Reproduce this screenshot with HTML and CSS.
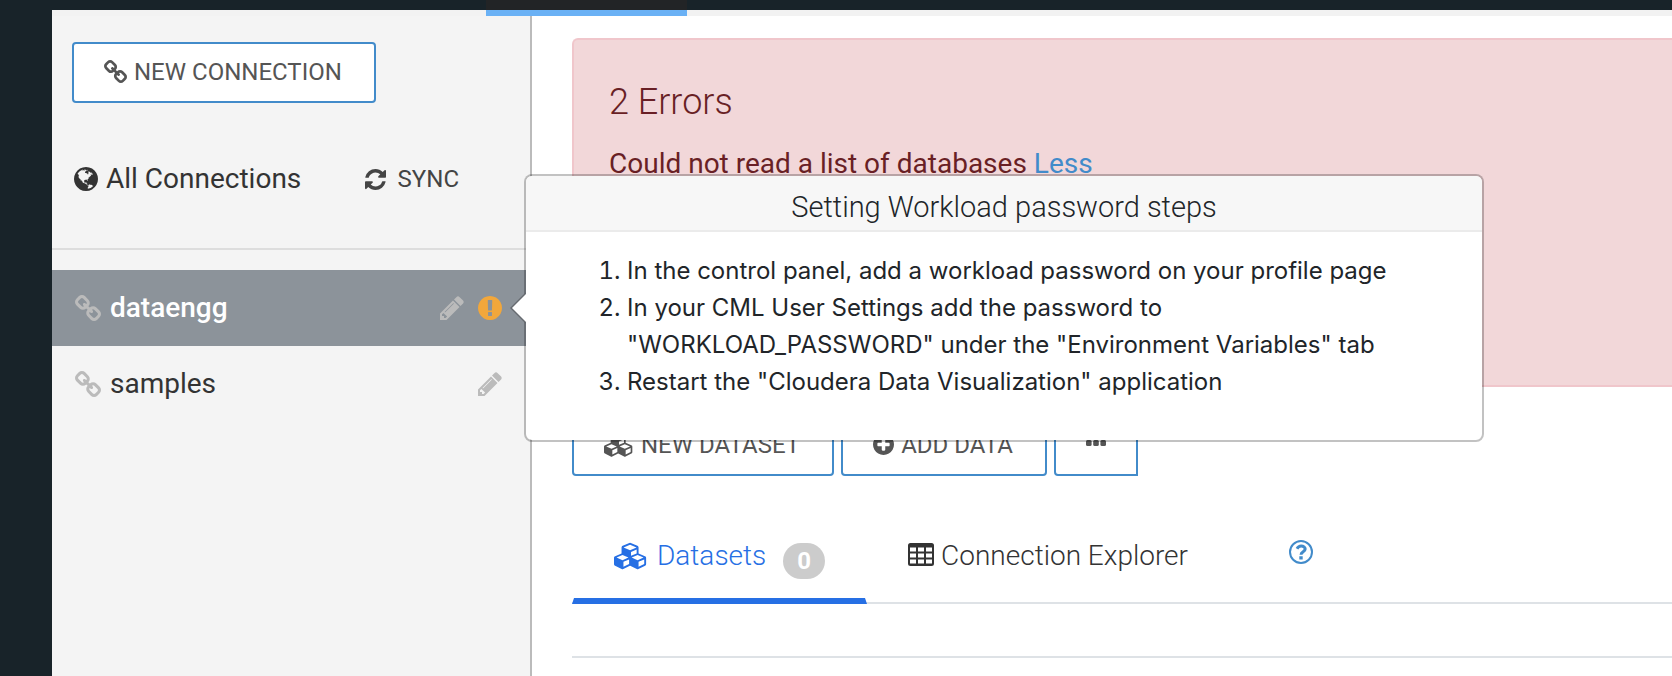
FILE: index.html
```html
<!DOCTYPE html>
<html lang="en">
<head>
<meta charset="utf-8">
<title>Connections</title>
<link rel="stylesheet" href="styles.css">
</head>
<body>
<svg class="defs" aria-hidden="true">
  <symbol id="i-link" viewBox="16 16 1632 1632"><path d="M1456 1216q0-40-28-68l-208-208q-28-28-68-28-42 0-72 32 3 3 19 18.500t21.500 21.500 15 19 13 25.500 3.500 27.500q0 40-28 68t-68 28q-15 0-27.500-3.500t-25.500-13-19-15-21.500-21.500-18.500-19q-33 31-33 73 0 40 28 68l206 207q27 27 68 27 40 0 68-26l147-146q28-28 28-67zm-703-705q0-40-28-68l-206-207q-28-28-68-28-39 0-68 27l-147 146q-28 28-28 67 0 40 28 68l208 208q27 27 68 27 42 0 72-31-3-3-19-18.500t-21.500-21.500-15-19-13-25.500-3.500-27.500q0-40 28-68t68-28q15 0 27.500 3.500t25.500 13 19 15 21.500 21.500 18.500 19q33-31 33-73zm895 705q0 120-85 203l-147 146q-83 83-203 83-121 0-204-85l-206-207q-83-83-83-203 0-123 88-209l-88-88q-86 88-208 88-120 0-204-84l-208-208q-84-84-84-204t85-203l147-146q83-83 203-83 121 0 204 85l206 207q83 83 83 203 0 123-88 209l88 88q86-88 208-88 120 0 204 84l208 208q84 84 84 204z"/></symbol>
  <symbol id="i-globe" viewBox="128 128 1536 1536"><path d="M896 128q209 0 385.500 103t279.500 279.500 103 385.500-103 385.500-279.500 279.500-385.500 103-385.500-103-279.500-279.500-103-385.500 103-385.500 279.500-279.500 385.500-103zm274 521q-2 1-9.500 9.500t-13.500 9.500q2 0 4.500-5t5-11 3.500-7q6-7 22-15 14-6 52-12 34-8 51 11-2-2 9.500-13t14.500-12q3-2 15-4.500t15-7.500l2-22q-12 1-17.500-7t-6.500-21q0 2-6 8 0-7-4.500-8t-11.500 1-9 1q-10-3-15-7.500t-8-16.500-4-15q-2-5-9.500-10.500t-9.500-10.500q-1-2-2.500-5.500t-3-6.500-4-5.500-5.500-2.500-7 5-7.500 10-4.500 5q-3-2-6-1.500t-4.500 1-4.500 3-5 3.500q-3 2-8.500 3t-8.500 2q15-5-1-11-10-4-16-3 9-4 7.500-12t-8.500-14h5q-1-4-8.500-8.500t-17.500-8.500-13-6q-8-5-34-9.500t-33-.5q-5 6-4.500 10.500t4 14 3.500 12.500q1 6-5.500 13t-6.500 12q0 7 14 15.500t10 21.500q-3 8-16 16t-16 12q-5 8-1.500 18.500t10.500 16.500q2 2 1.500 4t-3.500 4.500-5.500 4-6.500 3.500l-3 2q-11 5-20.500-6t-13.500-26q-7-25-16-30-23-8-29 1-5-13-41-26-25-9-58-4 6-1 0-15-7-15-19-12 3-6 4-17.500t1-13.500q3-13 12-23 1-1 7-8.500t9.500-13.500.5-6q35 4 50-11 5-5 11.500-17t10.500-17q9-6 14-5.500t14.500 5.500 14.500 5q14 1 15.500-11t-7.500-20q12 1 3-17-4-7-8-9-12-4-27 5-8 4 2 8-1-1-9.500 10.500t-16.500 17.500-16-5q-1-1-5.500-13.500t-9.500-13.500q-8 0-16 15 3-8-11-15t-24-8q19-12-8-27-7-4-20.500-5t-19.500 4q-5 7-5.500 11.500t5 8 10.500 5.500 11.500 4 8.500 3q14 10 8 14-2 1-8.500 3.500t-11.500 4.500-6 4q-3 4 0 14t-2 14q-5-5-9-17.500t-7-16.500q7 9-25 6l-10-1q-4 0-16 2t-20.500 1-13.500-8q-4-8 0-20 1-4 4-2-4-3-11-9.500t-10-8.500q-46 15-94 41 6 1 12-1 5-2 13-6.500t10-5.500q34-14 42-7l5-5q14 16 20 25-7-4-30-1-20 6-22 12 7 12 5 18-4-3-11.500-10t-14.500-11-15-5q-16 0-22 1-146 80-235 222 7 7 12 8 4 1 5 9t2.500 11 11.500-3q9 8 3 19 1-1 44 27 19 17 21 21 3 11-10 18-1-2-9-9t-9-4q-3 5 .5 18.500t10.500 12.500q-7 0-9.500 16t-2.500 35.500-1 23.500l2 1q-3 12 5.500 34.500t21.500 19.500q-13 3 20 43 6 8 8 9 3 2 12 7.500t15 10 10 10.500q4 5 10 22.500t14 23.500q-2 6 9.500 20t10.500 23q-1 0-2.500 1t-2.500 1q3 7 15.500 14t15.500 13q1 3 2 10t3 11 8 2q2-20-24-62-15-25-17-29-3-5-5.500-15.500t-4.500-14.500q2 0 6 1.500t8.500 3.500 7.500 4 2 3q-3 7 2 17.500t12 18.500 17 19 12 13q6 6 14 19.500t0 13.500q9 0 20 10.500t17 19.500q5 8 8 26t5 24q2 7 8.500 13.500t12.500 9.500l16 8 13 7q5 2 18.500 10.500t21.500 11.500q10 4 16 4t14.500-2.500 13.500-3.500q15-2 29 15t21 21q36 19 55 11-2 1 .5 7.500t8 15.500 9 14.500 5.500 8.500q5 6 18 15t18 15q6-4 7-9-3 8 7 20t18 10q14-3 14-32-31 15-49-18 0-1-2.500-5.500t-4-8.500-2.500-8.500 0-7.500 5-3q9 0 10-3.500t-2-12.500-4-13q-1-8-11-20t-12-15q-5 9-16 8t-16-9q0 1-1.500 5.500t-1.500 6.500q-13 0-15-1 1-3 2.500-17.500t3.500-22.500q1-4 5.500-12t7.500-14.500 4-12.500-4.500-9.500-17.500-2.500q-19 1-26 20-1 3-3 10.500t-5 11.500-9 7q-7 3-24 2t-24-5q-13-8-22.500-29t-9.500-37q0-10 2.500-26.500t3-25-5.500-24.500q3-2 9-9.500t10-10.500q2-1 4.500-1.500t4.500 0 4-1.500 3-6q-1-1-4-3-3-3-4-3 7 3 28.500-1.500t27.500 1.500q15 11 22-2 0-1-2.500-9.500t-.5-13.500q5 27 29 9 3 3 15.500 5t17.500 5q3 2 7 5.500t5.500 4.500 5-.5 8.500-6.500q10 14 12 24 11 40 19 44 7 3 11 2t4.500-9.500 0-14-1.500-12.500l-1-8v-18l-1-8q-15-3-18.500-12t1.500-18.500 15-18.500q1-1 8-3.500t15.500-6.500 12.500-8q21-19 15-35 7 0 11-9-1 0-5-3t-7.500-5-4.500-2q9-5 2-16 5-3 7.500-11t7.500-10q9 12 21 2 7-8 1-16 5-7 20.500-10.500t18.500-9.500q7 2 8-2t1-12 3-12q4-5 15-9t13-5l17-11q3-4 0-4 18 2 31-11 10-11-6-20 3-6-3-9.500t-15-5.500q3-1 11.500-.5t10.500-1.500q15-10-7-16-17-5-43 12zm-163 877q206-36 351-189-3-3-12.500-4.500t-12.500-3.500q-18-7-24-8 1-7-2.500-13t-8-9-12.500-8-11-7q-2-2-7-6t-7-5.500-7.500-4.500-8.500-2-10 1l-3 1q-3 1-5.500 2.500t-5.500 3-4 3 0 2.500q-21-17-36-22-5-1-11-5.500t-10.500-7-10-1.500-11.500 7q-5 5-6 15t-2 13q-7-5 0-17.500t2-18.500q-3-6-10.500-4.500t-12 4.500-11.500 8.500-9 6.500-8.500 5.500-8.500 7.500q-3 4-6 12t-5 11q-2-4-11.500-6.500t-9.500-5.500q2 10 4 35t5 38q7 31-12 48-27 25-29 40-4 22 12 26 0 7-8 20.500t-7 21.500q0 6 2 16z"/></symbol>
  <symbol id="i-sync" viewBox="128 128 1536 1536"><path d="M1639 1056q0 5-1 7-64 268-268 434.500t-478 166.500q-146 0-282.500-55t-243.500-157l-129 129q-19 19-45 19t-45-19-19-45v-448q0-26 19-45t45-19h448q26 0 45 19t19 45-19 45l-137 137q71 66 161 102t187 36q134 0 250-65t186-179q11-17 53-117 8-23 30-23h192q13 0 22.500 9.500t9.500 22.500zm25-800v448q0 26-19 45t-45 19h-448q-26 0-45-19t-19-45 19-45l138-138q-148-137-349-137-134 0-250 65t-186 179q-11 17-53 117-8 23-30 23h-199q-13 0-22.500-9.500t-9.500-22.500v-7q65-268 270-434.500t480-166.500q146 0 284 55.500t245 156.500l130-129q19-19 45-19t45 19 19 45z"/></symbol>
  <symbol id="i-pencil" viewBox="128 128 1536 1536"><path d="M491 1536l91-91-235-235-91 91v107h128v128h107zm523-928q0-22-22-22-10 0-17 7l-542 542q-7 7-7 17 0 22 22 22 10 0 17-7l542-542q7-7 7-17zm-54-192l416 416-832 832h-416v-416zm683 96q0 53-37 90l-166 166-416-416 166-165q36-38 90-38 53 0 91 38l235 234q37 39 37 91z"/></symbol>
  <symbol id="i-warn" viewBox="128 128 1536 1536"><path d="M896 128q209 0 385.500 103t279.500 279.500 103 385.500-103 385.500-279.500 279.500-385.500 103-385.500-103-279.500-279.500-103-385.500 103-385.500 279.500-279.500 385.500-103zm128 1247v-190q0-14-9-23.500t-22-9.500h-192q-13 0-23 10t-10 23v190q0 13 10 23t23 10h192q13 0 22-9.500t9-23.500zm-2-344l18-621q0-12-10-18-10-8-24-8h-220q-14 0-24 8-10 6-10 18l17 621q0 10 10 17.500t24 7.500h185q14 0 23.500-7.500t10.500-17.500z"/></symbol>
  <symbol id="i-plus" viewBox="128 128 1536 1536"><path d="M1344 960v-128q0-26-19-45t-45-19h-256v-256q0-26-19-45t-45-19h-128q-26 0-45 19t-19 45v256h-256q-26 0-45 19t-19 45v128q0 26 19 45t45 19h256v256q0 26 19 45t45 19h128q26 0 45-19t19-45v-256h256q26 0 45-19t19-45zm320-64q0 209-103 385.500t-279.500 279.500-385.500 103-385.500-103-279.500-279.500-103-385.500 103-385.500 279.500-279.500 385.500-103 385.500 103 279.500 279.500 103 385.500z"/></symbol>
  <symbol id="i-cubes" viewBox="0 0 2304 1792"><path d="M640 1632l384-192v-314l-384 164v342zm-64-454l404-173-404-173-404 173zm1088 454l384-192v-314l-384 164v342zm-64-454l404-173-404-173-404 173zm-448-293l384-165v-266l-384 164v267zm-64-379l441-189-441-189-441 189zm1088 518v416q0 36-19 67t-52 47l-448 224q-25 14-57 14t-57-14l-448-224q-4-2-7-4-2 2-7 4l-448 224q-25 14-57 14t-57-14l-448-224q-33-16-52-47t-19-67v-416q0-38 21.500-70t56.500-48l434-186v-400q0-38 21.500-70t56.500-48l448-192q23-10 50-10t50 10l448 192q35 16 56.500 48t21.500 70v400l434 186q36 16 57 48t21 70z"/></symbol>
  <symbol id="i-table" viewBox="0 0 26 23"><path fill-rule="evenodd" d="M2.500 0h21a2.500 2.500 0 0 1 2.500 2.500v18a2.500 2.500 0 0 1-2.500 2.500h-21a2.500 2.500 0 0 1-2.500-2.500v-18a2.500 2.500 0 0 1 2.500-2.500zM2 4.500v4h6v-4zM10 4.500v4h6v-4zM18 4.500v4h6v-4zM2 10.500v4h6v-4zM10 10.500v4h6v-4zM18 10.500v4h6v-4zM2 16.500v4h6v-4zM10 16.500v4h6v-4zM18 16.500v4h6v-4z"/></symbol>
  <symbol id="i-help" viewBox="0 0 24 24"><circle cx="12" cy="12" r="11" fill="none" stroke="currentColor" stroke-width="2"/><path fill="none" stroke="currentColor" stroke-width="3" d="M8 8.800C9 6.900 10.300 6 12.200 6c2.300 0 4 1.300 4 3.100 0 2.700-4.200 2.600-4.200 5.600"/><path d="M10.300 16.200h3.400v3.400h-3.400z"/></symbol>
  <symbol id="i-dots" viewBox="0 0 20 6"><rect width="5.600" height="6" rx="1.500"/><rect x="7.200" width="5.600" height="6" rx="1.500"/><rect x="14.400" width="5.600" height="6" rx="1.500"/></symbol>
</svg>

<header class="topbar"><span class="topbar-tab"></span></header>
<div class="app">
  <nav class="sidebar" aria-label="Connections">
    <div class="sidebar-head">
      <button class="btn" type="button"><svg class="icon s23"><use href="#i-link"/></svg>NEW CONNECTION</button>
      <div class="all-row">
        <a class="all-link" href="#"><svg class="icon s24"><use href="#i-globe"/></svg>All Connections</a>
        <button class="sync" type="button"><svg class="icon s21"><use href="#i-sync"/></svg>SYNC</button>
      </div>
    </div>
    <ul class="connections">
      <li class="connection active">
        <a class="connection-name" href="#"><svg class="icon s26"><use href="#i-link"/></svg>dataengg</a>
        <button class="icon-btn" type="button" aria-label="Edit dataengg"><svg class="icon s24"><use href="#i-pencil"/></svg></button>
        <button class="icon-btn warn" type="button" aria-label="Connection warning"><svg class="icon s24"><use href="#i-warn"/></svg></button>
        <section class="popover" role="dialog" aria-labelledby="pop-title">
          <h3 class="popover-title" id="pop-title">Setting Workload password steps</h3>
          <ol class="popover-steps">
            <li>In the control panel, add a workload password on your profile page</li>
            <li>In your CML User Settings add the password to "WORKLOAD_PASSWORD" under the "Environment Variables" tab</li>
            <li>Restart the "Cloudera Data Visualization" application</li>
          </ol>
        </section>
      </li>
      <li class="connection">
        <a class="connection-name" href="#"><svg class="icon s26"><use href="#i-link"/></svg>samples</a>
        <button class="icon-btn" type="button" aria-label="Edit samples"><svg class="icon s24"><use href="#i-pencil"/></svg></button>
      </li>
    </ul>
  </nav>
  <main class="content">
    <section class="alert" role="alert">
      <h2 class="alert-title">2 Errors</h2>
      <p class="alert-text">Could not read a list of databases <a class="alert-link" href="#">Less</a></p>
    </section>
    <div class="toolbar">
      <button class="btn" type="button"><svg class="icon cubes-sm"><use href="#i-cubes"/></svg>NEW DATASET</button>
      <button class="btn" type="button"><svg class="icon s21"><use href="#i-plus"/></svg>ADD DATA</button>
      <button class="btn more" type="button" aria-label="More"><svg class="icon dots"><use href="#i-dots"/></svg></button>
    </div>
    <div class="tabs">
      <a class="tab current" href="#"><svg class="icon cubes-lg"><use href="#i-cubes"/></svg>Datasets<span class="badge">0</span></a>
      <a class="tab" href="#"><svg class="icon table-icon"><use href="#i-table"/></svg>Connection Explorer</a>
      <a class="help" href="#" aria-label="Help"><svg class="icon s24"><use href="#i-help"/></svg></a>
    </div>
    <hr class="rule">
  </main>
</div>
</body>
</html>
```
FILE: styles.css
```css
* { box-sizing: border-box; }

body {
  margin: 0;
  min-height: 100vh;
  display: flex;
  flex-direction: column;
  overflow: hidden;
  background: #182329;
  color: #333;
  font: 400 28px/36px Roboto, sans-serif;
}

a { color: inherit; text-decoration: none; }
button { font: inherit; color: inherit; background: none; border: 0; padding: 0; }
h2, h3, p, ul, ol { margin: 0; padding: 0; }

.defs { display: none; }
.icon { flex: none; display: block; fill: currentColor; }
.s21 { width: 21px; height: 21px; }
.s23 { width: 23px; height: 23px; }
.s24 { width: 24px; height: 24px; }
.s26 { width: 26px; height: 26px; }
.cubes-sm { width: 30px; height: 24px; }
.cubes-lg { width: 34px; height: 28px; }
.table-icon { width: 26px; height: 23px; margin-bottom: 4px; }
.dots { width: 20px; height: 6px; }

.topbar { height: 16px; margin-left: 52px; padding-left: 434px; border-bottom: 6px solid #f2f2f2; }
.topbar-tab { display: block; width: 201px; height: 16px; background: #222426; border-bottom: 6px solid #6ab1f5; }

.app { flex: 1; display: flex; padding-left: 52px; }

.sidebar { flex: none; width: 480px; background: #f4f4f4; border-right: 2px solid #bbb; }
.sidebar-head { padding: 26px 20px 51px; border-bottom: 2px solid #ddd; }

.btn {
  display: inline-flex;
  align-items: center;
  gap: 7px;
  height: 61px;
  padding: 0 32px 2px 30px;
  border: 2px solid #428bca;
  border-radius: 4px;
  background: #fff;
  color: #555;
  font-size: 24px;
}

.all-row { display: flex; align-items: center; justify-content: space-between; margin-top: 58px; padding: 0 51px 0 2px; }
.all-link { display: flex; align-items: center; gap: 8px; }
.sync { display: flex; align-items: center; gap: 12px; color: #444; font-size: 24px; }

.connections { margin-top: 20px; list-style: none; }
.connection { position: relative; display: flex; align-items: center; gap: 14px; height: 76px; padding: 0 28px 0 23px; }
.connection-name { flex: 1; display: flex; align-items: center; gap: 9px; }
.connection-name .icon, .icon-btn { color: #bbb; }
.active { background: #8c939a; color: #fff; }
.active .connection-name { font-weight: 500; }
.icon-btn.warn { color: #f2a73b; }

.popover {
  position: absolute;
  z-index: 2;
  top: -96px;
  left: calc(100% - 6px);
  width: 960px;
  padding-bottom: 30px;
  background: #fff;
  background-clip: padding-box;
  border: 2px solid rgba(0, 0, 0, .24);
  border-radius: 8px;
  color: #212529;
}
.popover::before, .popover::after {
  content: "";
  position: absolute;
  top: 118px;
  left: -14px;
  border: 14px solid transparent;
  border-left: 0;
  border-right-color: #fff;
}
.popover::before { top: 116px; left: -16px; border-width: 16px 16px 16px 0; border-right-color: #666b70; }
.popover-title {
  padding: 13px 16px 5px;
  border-bottom: 2px solid #ebebeb;
  border-radius: 6px 6px 0 0;
  background: #f7f7f7;
  font-size: 29px;
  font-weight: 300;
  text-align: center;
}
.popover-steps { padding: 20px 80px 10px 101px; font: 400 24px/37px Inter, sans-serif; }

.content { flex: 1; min-width: 0; padding: 22px 0 0 40px; background: #fff; }

.alert {
  height: 349px;
  padding: 40px 35px;
  border: 2px solid #f0c6cb;
  border-right: 0;
  border-radius: 6px 0 0 6px;
  background: #f2d7d9;
  color: #691f25;
}
.alert-title { font-size: 36px; line-height: 44px; font-weight: 300; }
.alert-text { margin-top: 22px; }
.alert-link { color: #428bca; }

.toolbar { display: flex; gap: 7px; margin-top: 28px; }
.more { padding: 0 30px 6px; border-radius: 4px 0 0 4px; }

.tabs { display: flex; margin-top: 48px; border-bottom: 2px solid #dee2e6; }
.tab { display: flex; align-items: center; gap: 7px; height: 80px; margin-bottom: -2px; padding: 0 39px 12px; border: 2px solid transparent; border-bottom-width: 6px; font-weight: 300; }
.current { gap: 9px; padding: 0 40px 12px; color: #266fe4; border-bottom-color: #266fe4; }
.badge { margin: 10px 0 0 8px; padding: 0 14px; border-radius: 18px; background: #ccc; color: #fff; font-size: 24px; font-weight: 700; }
.help { display: flex; align-items: center; height: 56px; margin-left: 60px; color: #428bca; }

.rule { margin: 52px 0 0; border: 0; border-top: 2px solid #dee2e6; }
```
